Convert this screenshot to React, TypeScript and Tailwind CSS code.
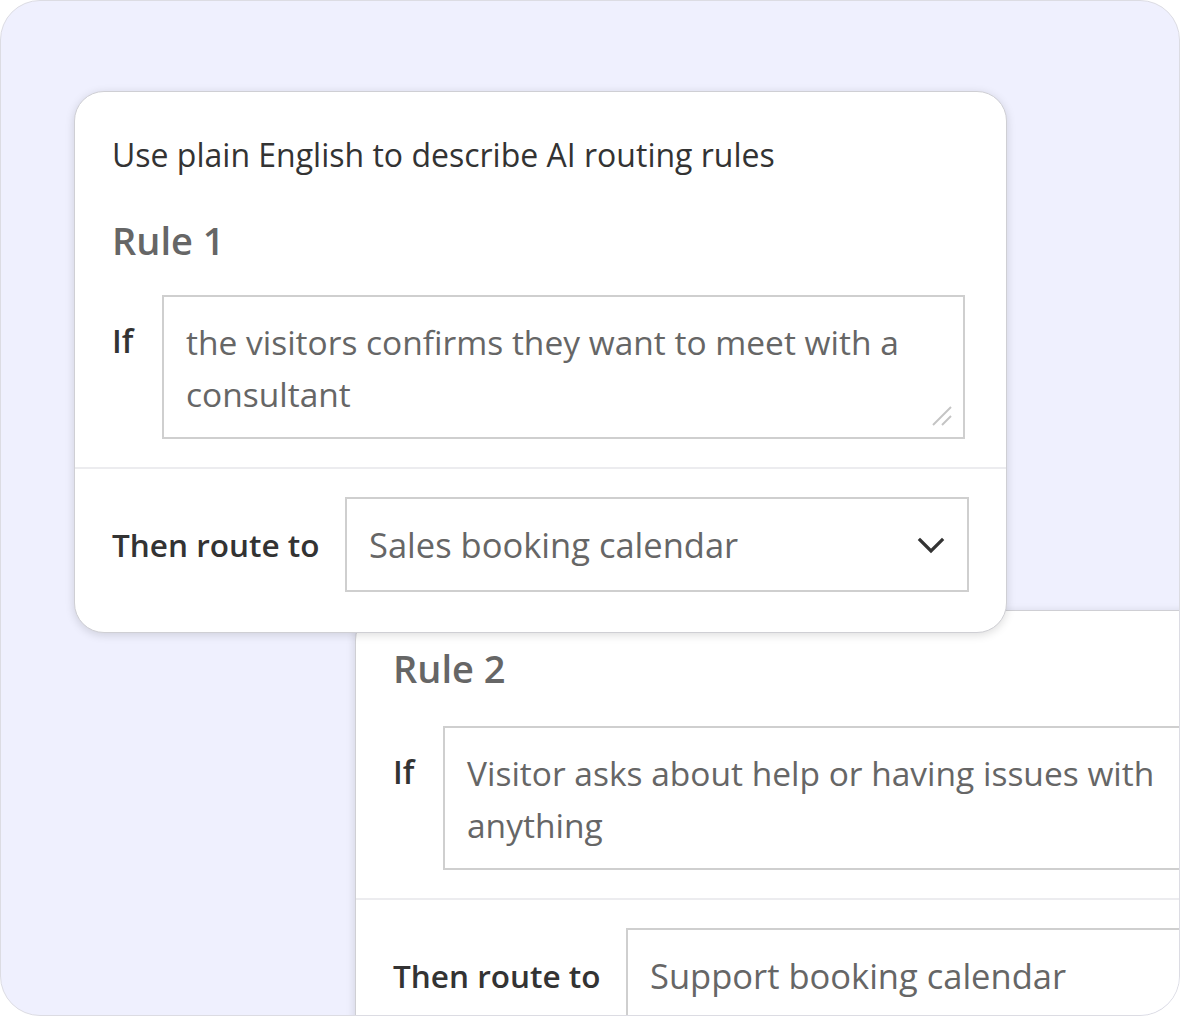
import React from 'react'

interface RuleCardProps {
  title: string
  condition: string
  target: string
  intro?: string
  className?: string
}

function ResizeGrip() {
  return (
    <svg className="absolute right-[10px] bottom-[10px] w-[22px] h-[22px]" viewBox="0 0 22 22" fill="none">
      <line x1="2" y1="20" x2="20" y2="2" stroke="#c4c4c4" strokeWidth="2" />
      <line x1="11" y1="20" x2="20" y2="11" stroke="#c4c4c4" strokeWidth="2" />
    </svg>
  )
}

function Chevron() {
  return (
    <svg className="w-[28px] h-[28px]" viewBox="0 0 28 28" fill="none">
      <polyline points="3,9 14,20 25,9" stroke="#333" strokeWidth="3.2" strokeLinecap="square" />
    </svg>
  )
}

function RuleCard({ title, condition, target, intro, className = '' }: RuleCardProps) {
  return (
    <div
      className={`w-[933px] bg-white rounded-[30px] border border-[#cfcfd4] shadow-[0_2px_10px_rgba(0,0,0,0.14)] ${className}`}
    >
      <div className={`px-[37px] pb-[28px] ${intro ? 'pt-[43px]' : 'pt-[33px]'}`}>
        {intro && (
          <p className="text-[32px] leading-[40px] text-[#333] mb-[41px] whitespace-nowrap">{intro}</p>
        )}
        <h2 className={`text-[38px] leading-[48px] font-semibold text-[#666] ${intro ? 'mb-[31px]' : 'mb-[34px]'}`}>
          {title}
        </h2>
        <div className="flex">
          <div className="w-[50px] pt-[24px] text-[32px] leading-[44px] font-semibold text-[#333]">If</div>
          <div className="relative w-[803px] h-[144px] border-2 border-[#cfcfcf] pl-[22px] pr-[30px] pt-[19px] text-[33.5px] leading-[52px] text-[#666]">
            {condition}
            <ResizeGrip />
          </div>
        </div>
      </div>
      <div className="border-t-2 border-[#ececef] px-[37px] pt-[28px] pb-[40px]">
        <div className="flex items-center">
          <div className="w-[233px] shrink-0 whitespace-nowrap text-[31.5px] leading-[44px] font-semibold text-[#333]">
            Then route to
          </div>
          <div className="w-[624px] h-[95px] shrink-0 border-2 border-[#cfcfcf] flex items-center justify-between pl-[22px] pr-[22px]">
            <span className="whitespace-nowrap text-[34.5px] leading-[44px] font-medium text-[#666]">{target}</span>
            <Chevron />
          </div>
        </div>
      </div>
    </div>
  )
}

export default function App() {
  return (
    <div className="w-[1180px] h-[1016px] bg-white font-['Open_Sans',sans-serif]">
      <div className="w-[1180px] h-[1016px] rounded-[40px] border border-[#dcdce3] bg-[#eff0fe] overflow-hidden pt-[90px]">
        <RuleCard
          className="relative z-10 ml-[73px]"
          intro="Use plain English to describe AI routing rules"
          title="Rule 1"
          condition="the visitors confirms they want to meet with a consultant"
          target="Sales booking calendar"
        />
        <RuleCard
          className="relative ml-[354px] -mt-[23px]"
          title="Rule 2"
          condition="Visitor asks about help or having issues with anything"
          target="Support booking calendar"
        />
      </div>
    </div>
  )
}
